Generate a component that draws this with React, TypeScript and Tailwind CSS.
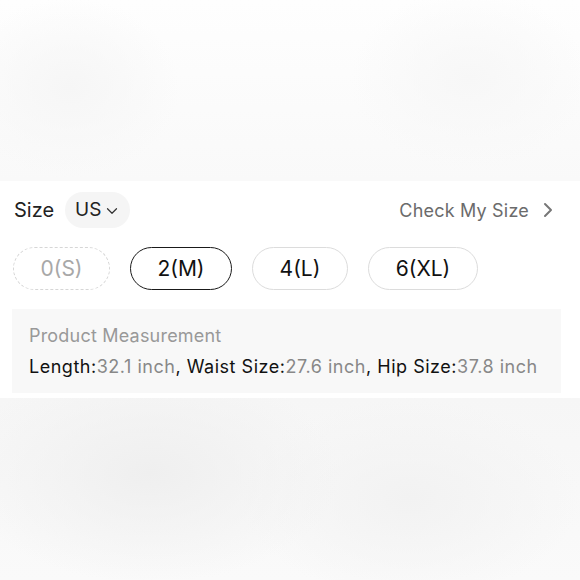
import { ChevronDown, ChevronRight } from "lucide-react";

const SIZES = [
  { label: "0(S)", width: "w-[97px]", state: "soldout" },
  { label: "2(M)", width: "w-[102px]", state: "selected" },
  { label: "4(L)", width: "w-[96px]", state: "normal" },
  { label: "6(XL)", width: "w-[110px]", state: "normal" },
];

const MEASURES = [
  { name: "Length", value: "32.1 inch" },
  { name: "Waist Size", value: "27.6 inch" },
  { name: "Hip Size", value: "37.8 inch" },
];

export default function App() {
  return (
    <div className="w-[580px] h-[580px] flex flex-col overflow-hidden bg-white font-['Inter',sans-serif]">
      {/* blurred product image above */}
      <div className="h-[181px] bg-[#fdfdfd] bg-[radial-gradient(ellipse_110px_90px_at_70px_88px,#f6f6f6,transparent),radial-gradient(ellipse_120px_90px_at_470px_80px,#f7f7f7,transparent),linear-gradient(to_bottom,#fefefe,#f9f9f9)]" />

      <div className="bg-white pt-[11px] pb-[5px]">
        <div className="flex items-center justify-between pl-[14px] pr-[20px]">
          <div className="flex items-center gap-[11px]">
            <span className="text-[20px] text-[#222]">Size</span>
            <button className="h-9 pl-[10px] pr-[9px] rounded-full bg-[#f5f5f5] flex items-center gap-[2px] text-[19px] text-[#222]">
              US
              <ChevronDown size={18} strokeWidth={1.6} className="text-[#333] mt-[2px]" />
            </button>
          </div>
          <div className="flex items-center gap-[7px] text-[#6b6b6b]">
            <span className="text-[18px] tracking-[0.2px]">Check My Size</span>
            <ChevronRight size={24} strokeWidth={2} className="text-[#777]" />
          </div>
        </div>

        <div className="flex gap-[20px] pl-[13px] mt-[19px]">
          {SIZES.map((s) => (
            <div
              key={s.label}
              className={
                "h-[43px] rounded-full flex items-center justify-center text-[21px] " +
                s.width +
                (s.state === "soldout"
                  ? " border border-dashed border-[#d6d6d6] text-[#a8a8a8]"
                  : s.state === "selected"
                  ? " border-[1.5px] border-[#1a1a1a] text-[#111]"
                  : " border border-[#dcdcdc] text-[#111]")
              }
            >
              {s.label}
            </div>
          ))}
        </div>

        <div className="ml-3 w-[549px] mt-[19px] bg-[#f8f8f8] pl-[17px] py-[11px] text-[18px] leading-[31px]">
          <div className="text-[#999] tracking-[0.2px]">Product Measurement</div>
          <div className="whitespace-nowrap tracking-[0.52px]">
            {MEASURES.map((m, i) => (
              <span key={m.name}>
                <span className="text-[#111]">{m.name}:</span>
                <span className="text-[#888]">{m.value}</span>
                {i < MEASURES.length - 1 && <span className="text-[#111]">, </span>}
              </span>
            ))}
          </div>
        </div>
      </div>

      {/* blurred content below */}
      <div className="flex-1 bg-[#f8f8f8] bg-[radial-gradient(ellipse_190px_110px_at_150px_75px,#efefef,transparent),radial-gradient(ellipse_170px_100px_at_410px_100px,#f2f2f2,transparent),linear-gradient(to_bottom,#f6f6f6,#fafafa)]" />
    </div>
  );
}
